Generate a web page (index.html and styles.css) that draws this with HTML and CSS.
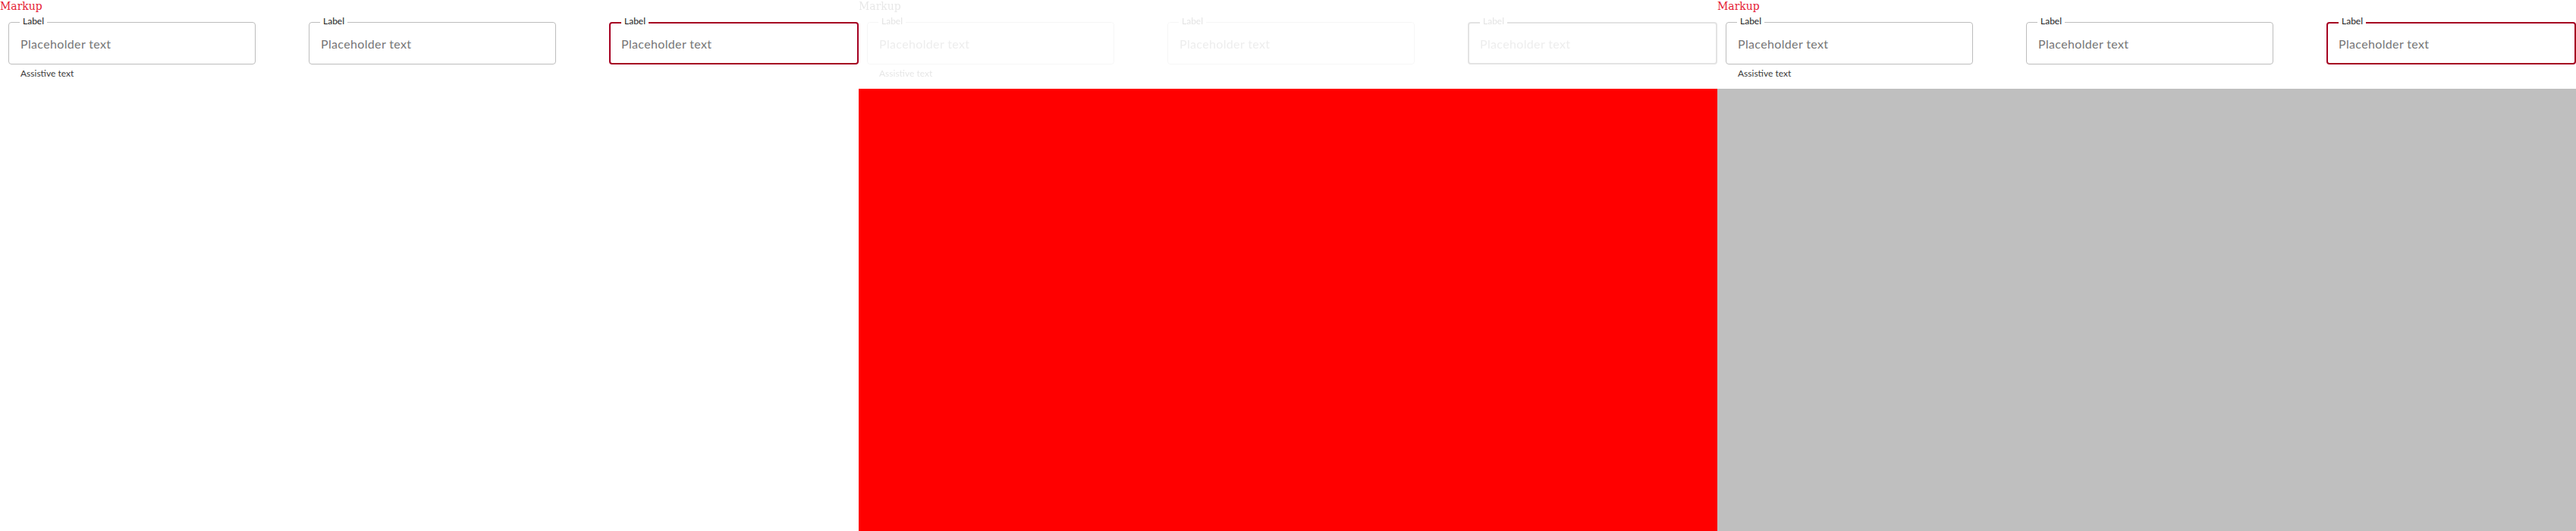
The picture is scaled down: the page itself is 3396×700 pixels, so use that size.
FILE: index.html
```html
<!DOCTYPE html>
<html lang="en">
<head>
<meta charset="utf-8">
<title>Markup</title>
<link rel="stylesheet" href="styles.css">
</head>
<body>
<div class="board">
  <section class="panel panel-ref">
    <div class="stage">
      <h1 class="title">Markup</h1>
      <div class="fields">
        <div class="field-wrap">
          <div class="field"><span class="field-label">Label</span><span class="ph">Placeholder text</span></div>
          <p class="assist">Assistive text</p>
        </div>
        <div class="field-wrap">
          <div class="field"><span class="field-label">Label</span><span class="ph">Placeholder text</span></div>
        </div>
        <div class="field-wrap">
          <div class="field field-error"><span class="field-label">Label</span><span class="ph">Placeholder text</span></div>
        </div>
      </div>
    </div>
    <div class="fill"></div>
  </section>
  <section class="panel panel-diff">
    <div class="stage">
      <h1 class="title">Markup</h1>
      <div class="fields">
        <div class="field-wrap">
          <div class="field"><span class="field-label">Label</span><span class="ph">Placeholder text</span></div>
          <p class="assist">Assistive text</p>
        </div>
        <div class="field-wrap">
          <div class="field"><span class="field-label">Label</span><span class="ph">Placeholder text</span></div>
        </div>
        <div class="field-wrap">
          <div class="field field-error"><span class="field-label">Label</span><span class="ph">Placeholder text</span></div>
        </div>
      </div>
    </div>
    <div class="fill"></div>
  </section>
  <section class="panel panel-test">
    <div class="stage">
      <h1 class="title">Markup</h1>
      <div class="fields">
        <div class="field-wrap">
          <div class="field"><span class="field-label">Label</span><span class="ph">Placeholder text</span></div>
          <p class="assist">Assistive text</p>
        </div>
        <div class="field-wrap">
          <div class="field"><span class="field-label">Label</span><span class="ph">Placeholder text</span></div>
        </div>
        <div class="field-wrap">
          <div class="field field-error"><span class="field-label">Label</span><span class="ph">Placeholder text</span></div>
        </div>
      </div>
    </div>
    <div class="fill"></div>
  </section>
</div>
</body>
</html>
```

FILE: styles.css
```css
html, body {
  margin: 0;
  padding: 0;
  background: #ffffff;
}

.board {
  display: flex;
  width: 3396px;
  height: 700px;
}

.panel {
  width: 1132px;
  height: 700px;
  display: flex;
  flex-direction: column;
  flex: none;
}

.stage {
  height: 117px;
  flex: none;
  background: #ffffff;
}

.fill {
  flex: 1;
}

.panel-ref .fill { background: #ffffff; }
.panel-diff .fill { background: #ff0000; }
.panel-test .fill { background: #bfbfbf; }

.panel-diff .stage {
  filter: grayscale(1) opacity(0.13);
}

.title {
  margin: 0;
  font-family: "DejaVu Serif", serif;
  font-weight: normal;
  font-size: 14px;
  line-height: 16px;
  color: #e51c35;
  height: 16px;
}

.fields {
  display: grid;
  grid-template-columns: 326px 326px 329px;
  column-gap: 70px;
  padding-left: 11px;
  margin-top: 13px;
  align-items: start;
}

.field {
  position: relative;
  box-sizing: border-box;
  height: 56px;
  border: 1px solid #bdbdbd;
  border-radius: 4px;
  display: flex;
  align-items: center;
  padding: 1px 0 0 15px;
  font-family: Lato, "Liberation Sans", sans-serif;
}

.field-error {
  border: 2px solid #a50021;
  padding-left: 14px;
}

.field-label {
  position: absolute;
  top: -9px;
  left: 14px;
  padding: 0 4px;
  background: #ffffff;
  font-size: 12px;
  line-height: 14px;
  color: #1b1b1b;
}

.field-error .field-label {
  top: -10px;
}

.ph {
  font-size: 16px;
  letter-spacing: 0.35px;
  color: #767676;
}

.assist {
  margin: 5px 0 0 16px;
  font-family: Lato, "Liberation Sans", sans-serif;
  font-size: 12px;
  line-height: 14px;
  color: #3a3a3a;
}
```
